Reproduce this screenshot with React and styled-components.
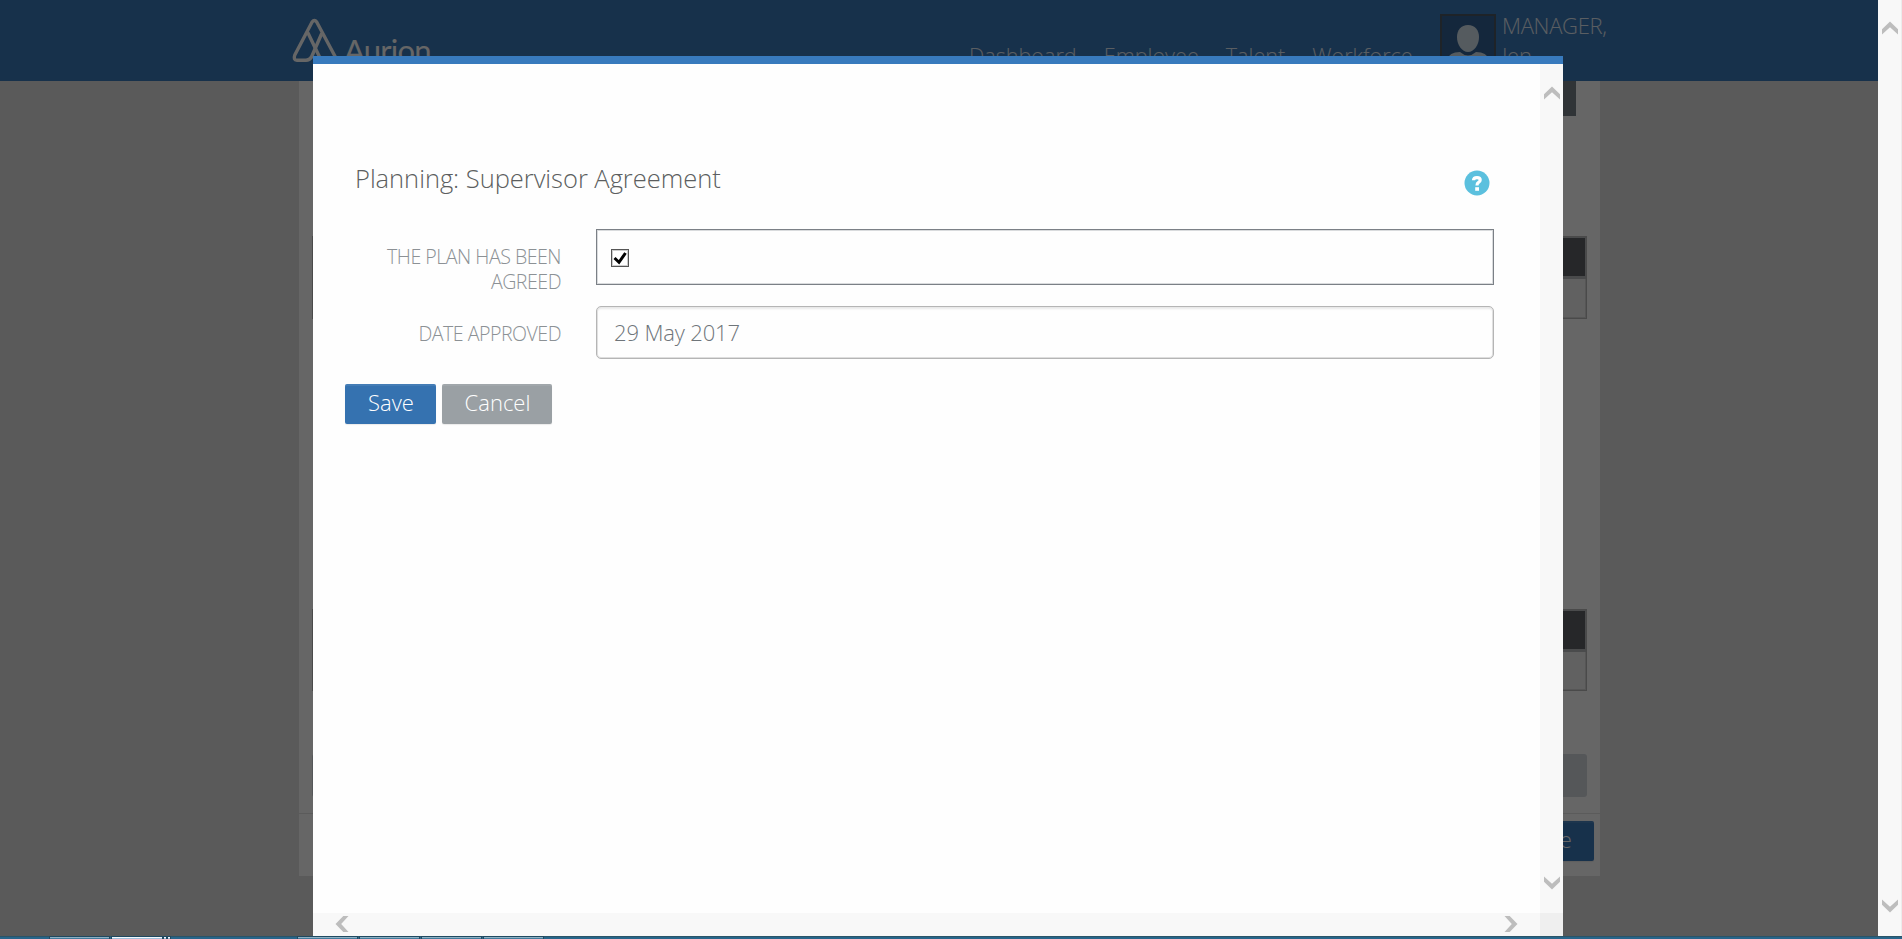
import React from "react";
import styled, { createGlobalStyle } from "styled-components";

const Global = createGlobalStyle`
  *, *::before, *::after { box-sizing: border-box; }
  html, body { margin: 0; padding: 0; overflow: hidden; }
  body { font-family: "Open Sans", "Noto Sans", sans-serif; font-weight: 300; }
`;

const Screen = styled.div`
  width: 1902px;
  height: 939px;
  display: flex;
  flex-direction: column;
  overflow: hidden;
`;

const Browser = styled.div`
  display: flex;
  height: 936px;
`;

const Viewport = styled.div`
  position: relative;
  width: 1878px;
  height: 936px;
  overflow: hidden;
  background: #e1e1e1;
`;

const Header = styled.header`
  display: flex;
  height: 81px;
  background: #3b7abb;
  color: #fff;
  padding-left: 290px;
`;

const Logo = styled.div`
  display: flex;
  width: 679px;
  padding-top: 16px;
`;

const LogoName = styled.span`
  font-family: Lato, sans-serif;
  font-weight: 400;
  font-size: 31px;
  line-height: 36px;
  letter-spacing: -0.8px;
  padding-top: 16px;
  margin-left: 4px;
`;

const Nav = styled.nav`
  display: flex;
  width: 471px;
  padding-top: 41px;
  gap: 27px;
`;

const NavItem = styled.a`
  font-size: 21.6px;
  line-height: 29px;
  white-space: nowrap;
  opacity: 0.85;
`;

const User = styled.div`
  display: flex;
  padding-top: 14px;
  gap: 6px;
`;

const Avatar = styled.div`
  width: 56px;
  height: 56px;
  border: 2px solid #4b5864;
  background: #326296;
`;

const UserName = styled.div`
  width: 110px;
  margin-top: -4px;
  font-size: 22px;
  line-height: 30px;
  letter-spacing: -0.3px;
  opacity: 0.85;
`;

const Page = styled.main`
  width: 1301px;
  height: 795px;
  margin-left: 299px;
  background: #fff;
  display: flex;
  flex-direction: column;
`;

const DarkPanel = styled.div`
  height: 35px;
  margin: 0 24px 120px 14px;
  background: #78828a;
`;

const Table = styled.div`
  height: ${(p) => p.$height}px;
  margin: 0 13px ${(p) => p.$after}px;
  border: 1px solid #b8b8b8;
  box-shadow: inset -1px -1px #d8d8d8;
  background: #f2f2f2;
`;

const TableHead = styled.div`
  height: 42px;
  background: #5f6266;
  border: solid #b9bbbe;
  border-width: 1px 1px 3px 0;
`;

const GreyField = styled.div`
  height: 43px;
  margin: 0 13px 16px;
  border-radius: 3px;
  background: #d5d9de;
`;

const PageFooter = styled.div`
  display: flex;
  justify-content: flex-end;
  padding: 7px 6px 0;
  border-top: 1px solid #e3e3e3;
`;

const Overlay = styled.div`
  position: absolute;
  inset: 0;
  background: rgba(0, 0, 0, 0.6);
`;

const Modal = styled.section`
  position: absolute;
  left: 313px;
  top: 56px;
  width: 1250px;
  height: 880px;
  border-top: 8px solid #387abd;
  background: #fefefe;
  display: grid;
  grid-template: 849px 23px / 1227px 23px;
`;

const ModalBody = styled.div`
  padding: 98px 46px 0 32px;
`;

const TitleRow = styled.div`
  display: flex;
  justify-content: space-between;
  height: 67px;
  padding: 0 4.5px 0 10px;
`;

const Title = styled.h1`
  margin: -1px 0 0;
  font-weight: 300;
  font-size: 25.5px;
  line-height: 34px;
  letter-spacing: -0.03px;
  color: #5c5e60;
  white-space: nowrap;
`;

const Help = styled.div`
  padding-top: 8px;
`;

const FormRow = styled.div`
  display: flex;
  justify-content: space-between;
  height: ${(p) => p.$height}px;
`;

const Label = styled.label`
  width: 216px;
  padding-top: 15px;
  text-align: right;
  font-size: 19.6px;
  line-height: 25px;
  letter-spacing: -0.5px;
  color: #8c9195;
`;

const CheckField = styled.div`
  width: 898px;
  height: 56px;
  padding: 19px 0 0 14px;
  border: 1px solid #7b8086;
  box-shadow: inset 0 0 0 1px #d9dbdd;
`;

const CheckBox = styled.div`
  width: 18px;
  height: 18px;
  border: 1px solid #555;
  background: #fff;
  box-shadow: inset 0 0 0 1px #ccc;
`;

const CheckMark = styled.svg`
  display: block;
`;

const TextField = styled.div`
  width: 898px;
  height: 53px;
  padding: 10px 17px;
  border: 1px solid #b5b5b5;
  border-radius: 5px;
  box-shadow: inset 0 2px 2px #e9e9e9, inset 0 0 0 1px #dedede;
  font-size: 22px;
  line-height: 30px;
  letter-spacing: -0.15px;
  color: #6f757a;
`;

const Buttons = styled.div`
  display: flex;
  gap: 6px;
`;

const Button = styled.button`
  width: ${(p) => p.$width}px;
  height: 40px;
  padding: 0 0 3px 1px;
  border: 0;
  border-radius: 2px;
  background: ${(p) => p.$color};
  box-shadow: inset 0 2px rgba(255, 255, 255, 0.08), 0 1px 1px rgba(0, 0, 0, 0.08);
  color: #fff;
  font: 300 22px/37px "Open Sans", sans-serif;
`;

const ScrollTrack = styled.div`
  display: flex;
  flex-direction: ${(p) => (p.$row ? "row" : "column")};
  justify-content: space-between;
  align-items: center;
  padding: ${(p) => p.$pad};
  background: #f8f8f8;
`;

const WindowScroll = styled(ScrollTrack)`
  width: 24px;
  border-right: 1px solid #ececec;
`;

const Corner = styled.div`
  background: #efefef;
`;

const Taskbar = styled.div`
  display: flex;
  height: 3px;
  padding-left: 50px;
  background: #28658a;
  border-top: 1px solid #2a5468;
`;

const TaskItem = styled.div`
  width: ${(p) => p.$width}px;
  margin-right: ${(p) => p.$gap}px;
  background: ${(p) => (p.$active ? "#9fc0dc" : "#427c9e")};
  border-top: 1px solid ${(p) => (p.$active ? "#f2f8fc" : "#8fb0c2")};
  outline: 1px solid #204960;
`;

const tasks = [
  [59, 3, false], [50, 2, true], [2, 2, true], [2, 128, true],
  [59, 3, false], [59, 3, false], [59, 3, false], [59, 0, false],
];

function Chevron({ turn = 0 }) {
  return (
    <svg width="16" height="16" viewBox="0 0 16 16">
      <path d="M0 9.3 L8 1.5 L16 9.3 V14.500 L8 7.200 L0 14.500Z" fill="#bdbdbd" transform={`rotate(${turn} 8 8)`} />
    </svg>
  );
}

export default function App() {
  return (
    <Screen>
      <Global />
      <Browser>
        <Viewport>
          <Header>
            <Logo>
              <svg width="50" height="50" viewBox="290 16 50 50" fill="none" stroke="#fff" strokeWidth="3.4" strokeLinecap="round" strokeLinejoin="round">
                <path d="M337 60 L316.7 22 Q314.4 19 312.1 22 L294.8 55 Q293 60 297 60.3 H306 Q309.500 60.3 311.500 57 L321.500 34" />
                <path d="M308 33 L321 60" />
              </svg>
              <LogoName>Aurion</LogoName>
            </Logo>
            <Nav>
              <NavItem>Dashboard</NavItem>
              <NavItem>Employee</NavItem>
              <NavItem>Talent</NavItem>
              <NavItem>Workforce</NavItem>
            </Nav>
            <User>
              <Avatar>
                <svg width="52" height="52" viewBox="0 0 52 52" fill="#d5e4ee">
                  <path d="M26 9 C33 9 37 14 37 21 C37 29 32 36 26 36 C20 36 15 29 15 21 C15 14 19 9 26 9Z" />
                  <path d="M5 52 V44 Q7 36 18 36 Q26 43 34 36 Q45 36 47 44 V52Z" />
                </svg>
              </Avatar>
              <UserName>MANAGER, Jen</UserName>
            </User>
          </Header>
          <Page>
            <DarkPanel />
            <Table $height={83} $after={290}><TableHead /></Table>
            <Table $height={82} $after={63}><TableHead /></Table>
            <GreyField />
            <PageFooter>
              <Button $width={91} $color="#3b7abb">Save</Button>
            </PageFooter>
          </Page>
          <Overlay />
          <Modal>
            <ModalBody>
              <TitleRow>
                <Title>Planning: Supervisor Agreement</Title>
                <Help>
                  <svg width="26" height="26" viewBox="0 0 26 26">
                    <circle cx="13" cy="13" r="12.500" fill="#5bc0de" />
                    <path d="M9.500 10.300 Q9.600 7.600 13 7.600 Q16.200 7.600 16.200 10 Q16.200 11.400 14.500 12.500 Q13 13.300 13 15.500" fill="none" stroke="#fff" strokeWidth="3.200" />
                    <rect x="11.200" y="17.200" width="3.800" height="3.600" fill="#fff" />
                  </svg>
                </Help>
              </TitleRow>
              <FormRow $height={77}>
                <Label>THE PLAN HAS BEEN AGREED</Label>
                <CheckField>
                  <CheckBox>
                    <CheckMark width="16" height="16" viewBox="0 0 16 16">
                      <path d="M2.500 8 L7 12.300 L13.500 3" fill="none" stroke="#000" strokeWidth="3" />
                    </CheckMark>
                  </CheckBox>
                </CheckField>
              </FormRow>
              <FormRow $height={78}>
                <Label>DATE APPROVED</Label>
                <TextField>29 May 2017</TextField>
              </FormRow>
              <Buttons>
                <Button $width={91} $color="#3572b0">Save</Button>
                <Button $width={110} $color="#9aa0a4">Cancel</Button>
              </Buttons>
            </ModalBody>
            <ScrollTrack $pad="21px 0 22px"><Chevron /><Chevron turn={180} /></ScrollTrack>
            <ScrollTrack $row $pad="0 21px 1px 21px"><Chevron turn={-90} /><Chevron turn={90} /></ScrollTrack>
            <Corner />
          </Modal>
        </Viewport>
        <WindowScroll $pad="20px 0 22px"><Chevron /><Chevron turn={180} /></WindowScroll>
      </Browser>
      <Taskbar>
        {tasks.map(([w, g, a], i) => <TaskItem key={i} $width={w} $gap={g} $active={a} />)}
      </Taskbar>
    </Screen>
  );
}
